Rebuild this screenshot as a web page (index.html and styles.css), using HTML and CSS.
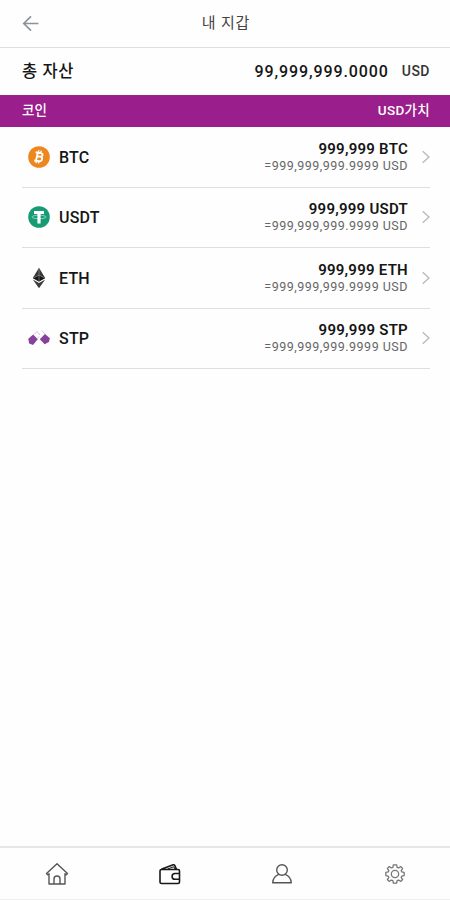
FILE: index.html
```html
<!DOCTYPE html>
<html lang="ko">
<head>
<meta charset="utf-8">
<title>내 지갑</title>
<link rel="stylesheet" href="styles.css">
</head>
<body>
<div class="app">
  <header class="top">
    <svg class="back" viewBox="0 0 16 16"><path d="M15 8H1.5M8 1.2L1.2 8L8 14.8"/></svg>
    <h1>내 지갑</h1>
  </header>
  <section class="total">
    <span class="label">총 자산</span>
    <span class="amount">99,999,999.0000</span>
    <span class="unit">USD</span>
  </section>
  <div class="bar"><span>코인</span><span class="value">USD가치</span></div>
  <ul class="coins">
    <li>
      <svg class="coin" viewBox="0 0 22 22"><circle cx="11" cy="11" r="10.8" fill="#ec861d"/><g fill="none" stroke="#fff" stroke-width="1.9" stroke-linejoin="round"><path d="M7.6 6.2L12.8 7.1C15.6 7.6 15 10.7 12 10.6L9 10.2M12 10.6C15.3 11 14.5 15.5 11 15.2L6.2 14.5M9.8 6.6L8 14.8"/><path stroke-width="1.3" d="M10.9 4.2L10.3 6.6M13.3 4.6L12.7 7M8.5 14.8L8 17.2M10.9 15.2L10.4 17.5"/></g></svg>
      <span class="name">BTC</span>
      <div class="balance"><b>999,999 BTC</b><small>=999,999,999.9999 USD</small></div>
      <svg class="chev" viewBox="0 0 8 14"><path d="M.7 1.2L7 7L.7 12.8"/></svg>
    </li>
    <li>
      <svg class="coin" viewBox="0 0 22 22"><circle cx="11" cy="11" r="10.8" fill="#169b73"/><ellipse cx="11" cy="11" rx="7.2" ry="1.7" fill="none" stroke="#a9dccb" stroke-width=".8"/><path d="M6 5H16V7.9H12.6V17.4H9.4V7.9H6Z" fill="#fff"/></svg>
      <span class="name">USDT</span>
      <div class="balance"><b>999,999 USDT</b><small>=999,999,999.9999 USD</small></div>
      <svg class="chev" viewBox="0 0 8 14"><path d="M.7 1.2L7 7L.7 12.8"/></svg>
    </li>
    <li>
      <svg class="coin" viewBox="0 0 22 22"><path d="M11 .7L4.8 11L11 14.6L17.2 11Z" fill="#383838"/><path d="M11 8.2L4.8 11L11 14.6L17.2 11Z" fill="#151515"/><path d="M4.8 12.4L11 21.3L17.2 12.4L11 16.1Z" fill="#3c3c3c"/><path d="M11 1V14.4M5.2 11L11 8.2L16.8 11" fill="none" stroke="#999" stroke-width=".6"/></svg>
      <span class="name">ETH</span>
      <div class="balance"><b>999,999 ETH</b><small>=999,999,999.9999 USD</small></div>
      <svg class="chev" viewBox="0 0 8 14"><path d="M.7 1.2L7 7L.7 12.8"/></svg>
    </li>
    <li>
      <svg class="coin" viewBox="0 0 22 22"><path d="M.3 11.8L5.2 7.6L9.8 12.2L5 18L1.2 16.4Z" fill="#86429c"/><path d="M11.8 12.2L17 7L21.9 11.2L20.9 15L16.7 17.2Z" fill="#86429c"/><path d="M6 7.5L9 4.4L12.1 8.2M9.6 11.5L11 9.4M14 3.6L17 7" fill="none" stroke="#c4b4d0" stroke-width=".8"/></svg>
      <span class="name">STP</span>
      <div class="balance"><b>999,999 STP</b><small>=999,999,999.9999 USD</small></div>
      <svg class="chev" viewBox="0 0 8 14"><path d="M.7 1.2L7 7L.7 12.8"/></svg>
    </li>
  </ul>
  <nav>
    <a><svg viewBox="0 0 24 24"><path d="M1.5 11.5L12 1.7L22.5 11.5L21.3 12.8L20 11.7V22H15V17A3 3 0 0 0 9 17V22H4V11.7L2.7 12.8ZM9 22H15"/></svg></a>
    <a class="active"><svg viewBox="0 0 24 24"><path d="M3.5 7.5H20Q21.5 7.5 21.5 9V20Q21.5 21.5 20 21.5H3.5Q2 21.5 2 20V9Q2 7.5 3.5 7.5ZM3.3 7.3L15.2 2.8Q16.2 2.5 16.7 3.4L18.5 7.3M21.5 11.5H17A2.9 2.9 0 0 0 17 17.3H21.5"/><path class="flap" d="M9.5 7L15.8 4.8L17 7"/></svg></a>
    <a><svg viewBox="0 0 24 24"><circle cx="12" cy="8" r="5.3"/><path d="M8.8 12.3C4.9 13.8 2.9 17 2.7 20.8H21.3C21.1 17 19.1 13.8 15.2 12.3"/></svg></a>
    <a class="gear"><svg viewBox="0 0 24 24"><circle cx="12" cy="12" r="4"/><path d="M10.2 2H13.8L14.3 4.7L16 5.4L18.2 3.9L20.3 6L18.7 8.2L19.4 9.8L22 10.3V13.7L19.4 14.2L18.7 15.8L20.3 18L18.2 20.1L16 18.6L14.3 19.3L13.8 22H10.2L9.7 19.3L8 18.6L5.8 20.1L3.7 18L5.3 15.8L4.6 14.2L2 13.7V10.3L4.6 9.8L5.3 8.2L3.7 6L5.8 3.9L8 5.4L9.7 4.7Z"/></svg></a>
  </nav>
</div>
</body>
</html>
```
FILE: styles.css
```css
* { box-sizing: border-box; }
body { margin: 0; background: #fefefe; color: #161616; font-family: Roboto, "Noto Sans CJK KR", sans-serif; }
.app { height: 900px; display: flex; flex-direction: column; }
.top { height: 47.5px; border-bottom: 1px solid #dedede; display: grid; grid-template-columns: 1fr auto 1fr; align-items: center; padding: 0 20px 0 22px; }
.back { width: 18px; height: 17px; fill: none; stroke: #899499; stroke-width: 1.6; }
h1 { margin: 0; font-size: 15px; font-weight: 400; letter-spacing: .8px; color: #444; line-height: 20px; padding-bottom: 1px; }
.total { height: 47px; padding: 0 20px 0 22px; display: flex; align-items: center; }
.label { font-size: 16.5px; font-weight: 500; letter-spacing: .6px; margin-right: auto; padding-bottom: 3px; }
.amount { font-size: 16px; font-weight: 500; letter-spacing: .9px; }
.unit { font-size: 14px; font-weight: 500; margin-left: 13px; letter-spacing: .5px; color: #333; }
.bar { height: 32.5px; background: #9a1e8b; color: #fff; padding: 0 20px 3px 22px; display: flex; justify-content: space-between; align-items: center; font-size: 13.5px; font-weight: 500; }
.bar .value { letter-spacing: .3px; }
.coins { list-style: none; margin: 0 20px 0 22px; padding: 0; }
.coins li { height: 60.5px; border-bottom: 1px solid #dedede; display: flex; align-items: center; padding-left: 6px; }
.coin { width: 22px; height: 22px; margin-right: 9px; }
.name { font-size: 16px; font-weight: 500; letter-spacing: .2px; padding-top: 1px; }
.balance { margin-left: auto; text-align: right; display: flex; flex-direction: column; }
.balance b { font-size: 15px; font-weight: 600; line-height: 18px; letter-spacing: .25px; }
.balance small { font-size: 12.5px; line-height: 16px; color: #666; letter-spacing: .5px; }
.chev { width: 8px; height: 14px; margin-left: 14px; fill: none; stroke: #bcbcbc; stroke-width: 1.5; }
nav { margin-top: auto; height: 54px; border-top: 2px solid #e6e6e6; border-bottom: 1px solid #eee; display: grid; grid-template-columns: repeat(4, 1fr); }
nav a { display: flex; align-items: center; justify-content: center; padding: 1px 0 0 2px; }
nav svg { width: 24px; height: 24px; fill: none; stroke: #555; stroke-width: 1.4; stroke-linejoin: round; }
nav .active svg { stroke: #181818; stroke-width: 1.6; }
nav .flap { stroke-width: 1; }
nav .gear svg { stroke: #777; width: 22px; height: 22px; }
```
